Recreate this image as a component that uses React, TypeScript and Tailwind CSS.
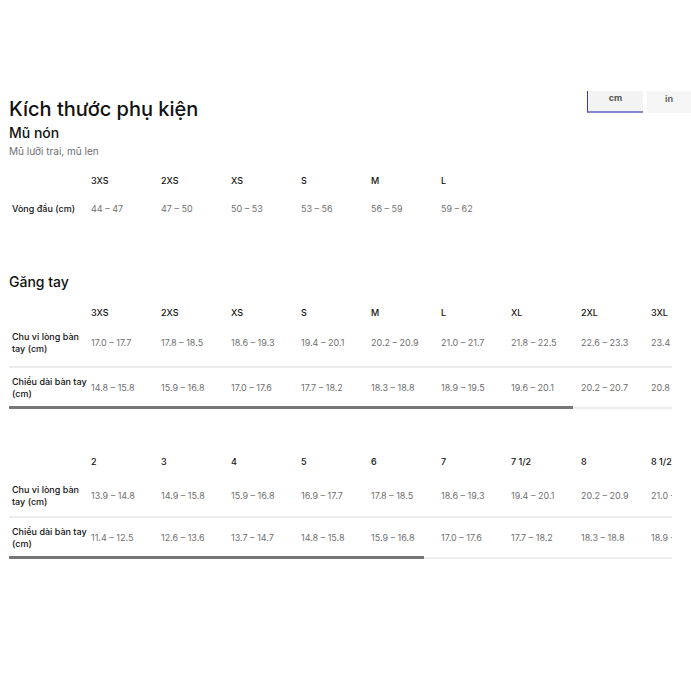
const gloveSizes = ['3XS', '2XS', 'XS', 'S', 'M', 'L', 'XL', '2XL', '3XL', '4XL']
const glovePalm = ['17.0 – 17.7', '17.8 – 18.5', '18.6 – 19.3', '19.4 – 20.1', '20.2 – 20.9', '21.0 – 21.7', '21.8 – 22.5', '22.6 – 23.3', '23.4 – 24.1', '24.2 – 24.9']
const gloveLen = ['14.8 – 15.8', '15.9 – 16.8', '17.0 – 17.6', '17.7 – 18.2', '18.3 – 18.8', '18.9 – 19.5', '19.6 – 20.1', '20.2 – 20.7', '20.8 – 21.3', '21.4 – 21.9']

const numSizes = ['2', '3', '4', '5', '6', '7', '7 1/2', '8', '8 1/2', '9', '9 1/2', '10', '11', '12']
const numPalm = ['13.9 – 14.8', '14.9 – 15.8', '15.9 – 16.8', '16.9 – 17.7', '17.8 – 18.5', '18.6 – 19.3', '19.4 – 20.1', '20.2 – 20.9', '21.0 – 21.7', '21.8 – 22.5', '22.6 – 23.3', '23.4 – 24.1', '24.2 – 24.9', '25.0 – 25.7']
const numLen = ['11.4 – 12.5', '12.6 – 13.6', '13.7 – 14.7', '14.8 – 15.8', '15.9 – 16.8', '17.0 – 17.6', '17.7 – 18.2', '18.3 – 18.8', '18.9 – 19.5', '19.6 – 20.1', '20.2 – 20.7', '20.8 – 21.3', '21.4 – 21.9', '22.0 – 22.5']

const Label = ({ children }: { children?: React.ReactNode }) => (
  <div className="w-[82px] shrink-0 pl-[3px] text-[9px] leading-[12px] font-medium text-[#111] whitespace-nowrap">{children}</div>
)

const Cells = ({ items, head }: { items: string[]; head?: boolean }) => (
  <>
    {items.map((v, i) => (
      <div
        key={i}
        className={
          head
            ? 'w-[70px] shrink-0 text-[9px] leading-[12px] font-medium text-[#111]'
            : 'w-[70px] shrink-0 text-[9px] leading-[12px] text-[#707070]'
        }
      >
        {v}
      </div>
    ))}
  </>
)

const GloveTable = ({
  sizes,
  palm,
  len,
  headH,
  row1,
  row2,
  thumb,
}: {
  sizes: string[]
  palm: string[]
  len: string[]
  headH: string
  row1: string
  row2: string
  thumb: string
}) => (
  <div className="w-[663px]">
    <div className="overflow-hidden">
      <div className="w-max">
        <div className={`flex items-center ${headH}`}>
          <Label />
          <Cells items={sizes} head />
        </div>
        <div className={`flex items-center border-b-2 border-[#ececec] ${row1}`}>
          <Label>
            Chu vi lòng bàn
            <br />
            tay (cm)
          </Label>
          <Cells items={palm} />
        </div>
        <div className={`flex items-center ${row2}`}>
          <Label>
            Chiều dài bàn tay
            <br />
            (cm)
          </Label>
          <Cells items={len} />
        </div>
      </div>
    </div>
    <div className="relative h-[2px] bg-[#ececec]">
      <div className={`absolute left-0 top-[-1px] h-[3px] bg-[#767676] ${thumb}`} />
    </div>
  </div>
)

export default function App() {
  return (
    <div
      className="w-[691px] h-[691px] bg-white pt-[91px] pl-[9px] overflow-hidden"
      style={{ fontFamily: 'Inter, "Noto Sans", sans-serif' }}
    >
      <div className="flex items-start justify-between">
        <div className="pt-[6px]">
          <h1 className="text-[20px] leading-[24px] font-medium text-[#111]">Kích thước phụ kiện</h1>
          <h2 className="mt-[3px] text-[14px] leading-[18px] font-medium text-[#111]">Mũ nón</h2>
          <p className="mt-[2px] text-[10px] leading-[14px] text-[#707070]">Mũ lưỡi trai, mũ len</p>
        </div>
        <div className="flex gap-[4px]">
          <button className="w-[56px] h-[22px] bg-[#f3f3f3] border-l border-[#3c3ca8] border-b-2 border-b-[#8585d2] text-[9px] font-bold text-[#555] leading-none pb-[7px]">
            cm
          </button>
          <button className="w-[44px] h-[22px] bg-[#f5f5f5] text-[9px] font-bold text-[#666] leading-none pb-[7px]">
            in
          </button>
        </div>
      </div>

      <div className="mt-[11px]">
        <div className="flex items-center h-[24px]">
          <Label />
          <Cells items={['3XS', '2XS', 'XS', 'S', 'M', 'L']} head />
        </div>
        <div className="flex items-center h-[32px]">
          <Label>Vòng đầu (cm)</Label>
          <Cells items={['44 – 47', '47 – 50', '50 – 53', '53 – 56', '56 – 59', '59 – 62']} />
        </div>
      </div>

      <h2 className="mt-[48px] text-[14px] leading-[18px] font-medium text-[#111]">Găng tay</h2>

      <div className="mt-[10px]">
        <GloveTable
          sizes={gloveSizes}
          palm={glovePalm}
          len={gloveLen}
          headH="h-[24px]"
          row1="pt-[6px] pb-[11px]"
          row2="pt-[8px] pb-[7px]"
          thumb="w-[564px]"
        />
      </div>

      <div className="mt-[37px]">
        <GloveTable
          sizes={numSizes}
          palm={numPalm}
          len={numLen}
          headH="h-[32px]"
          row1="pt-[6px] pb-[8px]"
          row2="pt-[8px] pb-[7px]"
          thumb="w-[415px]"
        />
      </div>
    </div>
  )
}
